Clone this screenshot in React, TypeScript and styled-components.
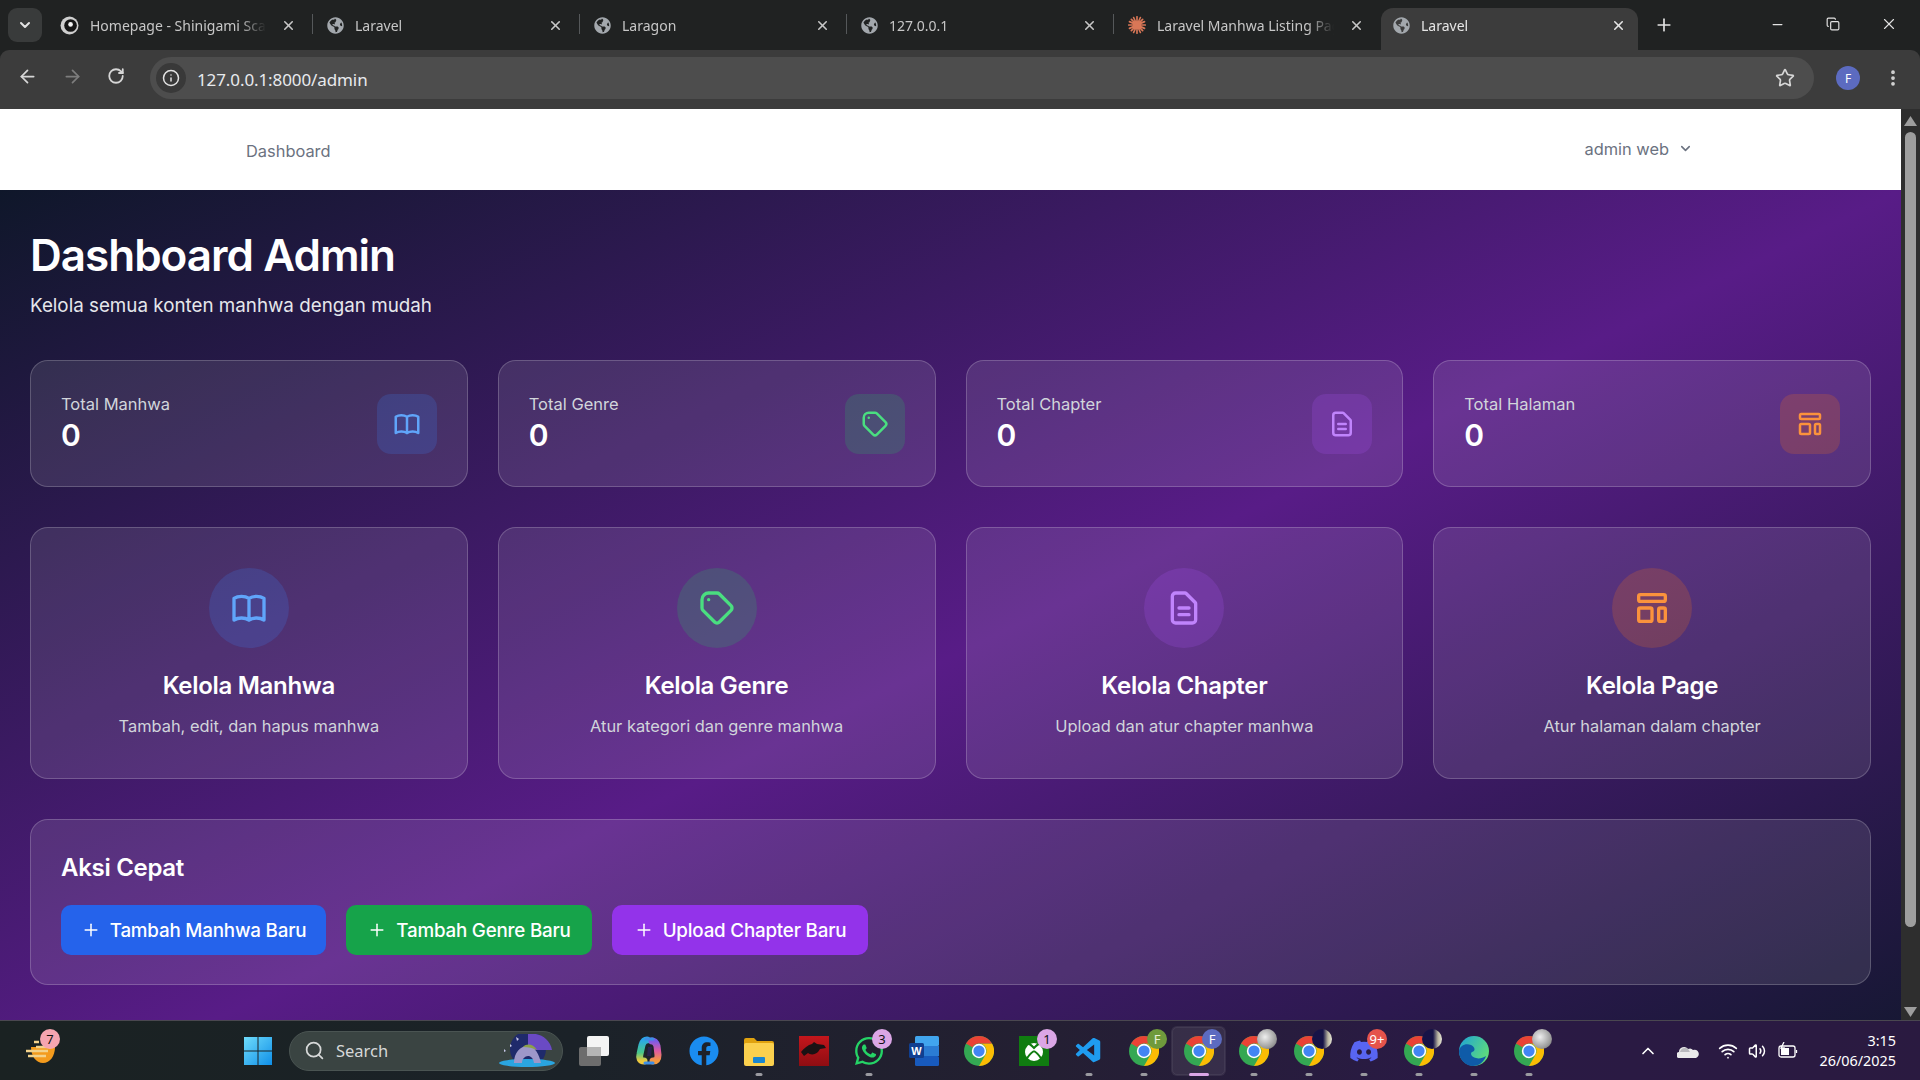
import React from 'react';
import styled, { createGlobalStyle } from 'styled-components';
import { FaDiscord, FaFacebook, FaGlobeAmericas, FaWhatsapp } from 'react-icons/fa';
import { VscVscode } from 'react-icons/vsc';
import { ArrowLeft, ArrowRight, ChevronDown, ChevronUp, Copy, EllipsisVertical, Info, Minus, Plus, RotateCw, Search, Star, Volume2, Wifi, X } from 'lucide-react';

const Global = createGlobalStyle`
  html, body { margin: 0; padding: 0; overflow: hidden; background: #202222; }
  * { box-sizing: border-box; }
`;

type Tone = 'blue' | 'green' | 'purple' | 'orange';

const tones: Record<Tone, { bg: string; fg: string }> = {
  blue: { bg: 'rgba(59,130,246,0.2)', fg: '#60a5fa' },
  green: { bg: 'rgba(34,197,94,0.2)', fg: '#4ade80' },
  purple: { bg: 'rgba(168,85,247,0.2)', fg: '#c084fc' },
  orange: { bg: 'rgba(249,115,22,0.2)', fg: '#fb923c' },
};

const Browser = styled.div`
  width: 1920px;
  height: 1080px;
  display: flex;
  flex-direction: column;
  overflow: hidden;
`;

/* chrome */
const TabStrip = styled.div`
  height: 50px;
  flex: none;
  background: #202222;
  display: flex;
  align-items: flex-end;
  padding-left: 8px;
  font-family: 'Noto Sans', sans-serif;
  font-size: 14px;
`;

const TabMenu = styled.div`
  width: 34px;
  height: 34px;
  margin: 0 4px 8px 0;
  border-radius: 9px;
  background: #393b3b;
  color: #e3e3e3;
  display: flex;
  align-items: center;
  justify-content: center;
`;

const Tab = styled.div<{ $active?: boolean; $last?: boolean }>`
  position: relative;
  width: ${(p) => (p.$active ? '257px' : '267px')};
  height: 42px;
  padding: ${(p) => (p.$active ? '0 12px 8px 12px' : '0 17px 8px 14px')};
  display: flex;
  align-items: center;
  gap: 11px;
  color: ${(p) => (p.$active ? '#e6e6e6' : '#c7c7c7')};
  background: ${(p) => (p.$active ? '#3c3c3c' : 'transparent')};
  border-radius: 12px 12px 0 0;
  &::after {
    content: '';
    display: ${(p) => (p.$active || p.$last ? 'none' : 'block')};
    position: absolute;
    right: 0;
    top: 6px;
    height: 20px;
    width: 1px;
    background: #55585a;
  }
`;

const TabTitle = styled.span`
  flex: 1;
  min-width: 0;
  margin-right: 4px;
  white-space: nowrap;
  overflow: hidden;
  -webkit-mask-image: linear-gradient(90deg, #000 85%, transparent);
  mask-image: linear-gradient(90deg, #000 85%, transparent);
`;

const NewTab = styled.div`
  width: 36px;
  height: 42px;
  margin-left: 8px;
  color: #e3e3e3;
  display: flex;
  align-items: center;
  justify-content: center;
  padding-bottom: 8px;
`;

const WindowButtons = styled.div`
  margin-left: auto;
  height: 50px;
  padding-right: 3px;
  display: flex;
  align-items: center;
  color: #e3e3e3;
`;

const WindowButton = styled.div`
  width: 56px;
  display: flex;
  justify-content: center;
  padding-bottom: 2px;
`;

const Toolbar = styled.div`
  height: 59px;
  flex: none;
  background: #3c3c3c;
  border-radius: 9px 9px 0 0;
  display: flex;
  align-items: center;
  padding: 0 15px 3px 17px;
  color: #dcdcdc;
`;

const NavButton = styled.div<{ $dim?: boolean }>`
  width: 45px;
  color: ${(p) => (p.$dim ? '#7d7d7d' : '#d6d6d6')};
`;

const Omnibox = styled.div`
  width: 1664px;
  height: 42px;
  margin-left: -2px;
  border-radius: 21px;
  background: #4d4d4d;
  display: flex;
  align-items: center;
  padding: 0 19px 0 6px;
  font-family: 'Noto Sans', sans-serif;
  font-size: 17px;
  color: #e8eaed;
`;

const SiteInfo = styled.div`
  width: 30px;
  height: 30px;
  border-radius: 50%;
  background: #393939;
  display: flex;
  align-items: center;
  justify-content: center;
  margin-right: 11px;
`;

const Url = styled.span`
  flex: 1;
  padding-top: 3px;
  letter-spacing: -0.1px;
`;

const Avatar = styled.div`
  width: 24px;
  height: 24px;
  margin-left: 22px;
  border-radius: 50%;
  background: #5c6bc0;
  color: #fff;
  font-family: 'Noto Sans', sans-serif;
  font-size: 12px;
  display: flex;
  align-items: center;
  justify-content: center;
`;

const Kebab = styled.div`
  margin-left: 23px;
  display: flex;
  color: #d6d6d6;
`;

/* page */
const Viewport = styled.div`
  flex: 1;
  min-height: 0;
  display: flex;
  overflow: hidden;
`;

const Page = styled.div`
  flex: 1;
  min-width: 0;
  font-family: 'Inter', sans-serif;
  overflow: hidden;
`;

const TopNav = styled.nav`
  height: 81px;
  background: #fff;
  display: flex;
  align-items: center;
  justify-content: space-between;
  padding: 0 208px 2px 246px;
  color: #6b7280;
  font-size: 16.4px;
`;

const NavLink = styled.a`
  padding-top: 5px;
  color: #6b7280;
`;

const UserMenu = styled.div`
  display: flex;
  align-items: center;
  gap: 9px;
  margin-left: -1px;
`;

const Main = styled.main`
  height: 935px;
  padding: 30px 30px 0;
  background: linear-gradient(to bottom right, #0f172a 0%, #581c87 50%, #0f172a 100%);
`;

const Title = styled.h1`
  margin: 0;
  font-size: 44px;
  line-height: 70px;
  font-weight: 600;
  letter-spacing: -1px;
  color: #fff;
`;

const Subtitle = styled.p`
  margin: 1px 0 39px;
  font-size: 18.8px;
  line-height: 30px;
  color: #e5e7eb;
`;

const CardGrid = styled.div`
  display: grid;
  grid-template-columns: repeat(4, 1fr);
  gap: 30px;
  margin-bottom: 40px;
`;

const Glass = styled.div`
  border-radius: 18px;
  background: rgba(255, 255, 255, 0.1);
  border: 1px solid rgba(255, 255, 255, 0.2);
`;

const StatCard = styled(Glass)`
  height: 127px;
  padding: 0 30px;
  display: flex;
  align-items: center;
  justify-content: space-between;
`;

const StatLabel = styled.div`
  font-size: 16.5px;
  line-height: 22px;
  margin-top: -1px;
  color: #d1d5db;
`;

const StatValue = styled.div`
  font-size: 30px;
  line-height: 36px;
  margin-top: 2px;
  font-weight: 600;
  color: #fff;
`;

const StatIcon = styled.div<{ $tone: Tone }>`
  width: 60px;
  height: 60px;
  border-radius: 14px;
  background: ${(p) => tones[p.$tone].bg};
  color: ${(p) => tones[p.$tone].fg};
  display: flex;
  align-items: center;
  justify-content: center;
`;

const ManageCard = styled(Glass)`
  height: 252px;
  padding-top: 40px;
  display: flex;
  flex-direction: column;
  align-items: center;
`;

const ManageIcon = styled.div<{ $tone: Tone }>`
  width: 80px;
  height: 80px;
  border-radius: 50%;
  background: ${(p) => tones[p.$tone].bg};
  color: ${(p) => tones[p.$tone].fg};
  display: flex;
  align-items: center;
  justify-content: center;
`;

const ManageTitle = styled.h3`
  margin: 20px 0 0;
  font-size: 24px;
  line-height: 36px;
  font-weight: 600;
  letter-spacing: -0.3px;
  color: #fff;
`;

const ManageText = styled.p`
  margin: 9px 0 0;
  font-size: 16.4px;
  line-height: 26px;
  color: #d1d5db;
`;

const QuickPanel = styled(Glass)`
  height: 166px;
  padding: 30px;
`;

const QuickTitle = styled.h3`
  margin: 0 0 19px;
  font-size: 24px;
  line-height: 36px;
  font-weight: 600;
  letter-spacing: -0.3px;
  color: #fff;
`;

const QuickRow = styled.div`
  display: flex;
  gap: 20px;
`;

const QuickButton = styled.a<{ $bg: string; $width: number }>`
  width: ${(p) => p.$width}px;
  height: 50px;
  display: flex;
  align-items: center;
  justify-content: center;
  gap: 9px;
  border-radius: 10px;
  background: ${(p) => p.$bg};
  color: #fff;
  font-size: 18.8px;
  font-weight: 500;
  letter-spacing: -0.2px;
  white-space: nowrap;
`;

const Scrollbar = styled.div`
  width: 19px;
  flex: none;
  background: #2e2e2e;
  display: flex;
  flex-direction: column;
  align-items: center;
  padding: 7px 0 3px;
`;

const ArrowGlyph = styled.div<{ $down?: boolean }>`
  width: 13px;
  height: 10px;
  background: #9e9e9e;
  clip-path: ${(p) => (p.$down ? 'polygon(0 0, 100% 0, 50% 100%)' : 'polygon(50% 0, 100% 100%, 0 100%)')};
`;

const Thumb = styled.div`
  width: 11px;
  height: 795px;
  margin-top: 6px;
  border-radius: 6px;
  background: #9e9e9e;
`;

const ScrollSpacer = styled.div`
  flex: 1;
`;

/* taskbar */
const Taskbar = styled.div`
  height: 60px;
  flex: none;
  border-top: 1px solid #4a4750;
  background: linear-gradient(90deg, #1a2222 0%, #1b2228 30%, #241f33 55%, #2a1a45 75%, #2a1a40 100%);
  display: flex;
  align-items: center;
  padding-left: 230px;
  position: relative;
  color: #fff;
  font-family: 'Noto Sans', sans-serif;
`;

const Weather = styled.div`
  position: absolute;
  left: 26px;
  top: 19px;
  width: 34px;
  height: 24px;
  display: flex;
`;

const TaskSlot = styled.div<{ $active?: boolean }>`
  position: relative;
  width: 55px;
  height: 50px;
  flex: none;
  display: flex;
  align-items: center;
  justify-content: center;
  border-radius: 6px;
  background: ${(p) => (p.$active ? 'rgba(255,255,255,0.08)' : 'transparent')};
  outline: ${(p) => (p.$active ? '1px solid rgba(255,255,255,0.06)' : 'none')};
  outline-offset: -2px;
`;

const RunDot = styled.i<{ $active?: boolean }>`
  position: absolute;
  bottom: 0;
  left: 50%;
  transform: translateX(-50%);
  width: ${(p) => (p.$active ? '20px' : '7px')};
  height: 3px;
  border-radius: 2px;
  background: ${(p) => (p.$active ? '#dba6e6' : '#9a9aa0')};
`;

const Badge = styled.span<{ $bg: string; $fg?: string }>`
  position: absolute;
  top: 3px;
  right: 4px;
  width: 20px;
  height: 20px;
  border-radius: 50%;
  background: ${(p) => p.$bg};
  color: ${(p) => p.$fg || '#111'};
  font-size: 13px;
  line-height: 20px;
  text-align: center;
`;

const WeatherBadge = styled(Badge)`
  top: -11px;
  right: 0;
`;

const SearchBox = styled.div`
  width: 274px;
  height: 40px;
  margin: 0 3px 0 4px;
  flex: none;
  border-radius: 20px;
  background: #3a4442;
  border: 1px solid #4a5452;
  display: flex;
  align-items: center;
  gap: 11px;
  padding-left: 14px;
  font-size: 16.5px;
  color: #d6d8d8;
  position: relative;
  overflow: hidden;
`;

const SearchArt = styled.div`
  position: absolute;
  right: 6px;
  top: 2px;
  display: flex;
`;

const Tray = styled.div`
  position: absolute;
  left: 1632px;
  right: 24px;
  top: 0;
  bottom: 0;
  display: flex;
  align-items: center;
`;

const TrayIcon = styled.div<{ $w: number }>`
  width: ${(p) => p.$w}px;
  display: flex;
  justify-content: center;
  flex: none;
`;

const Clock = styled.div`
  margin-left: auto;
  text-align: right;
  font-size: 14.4px;
  line-height: 20px;
  color: #fff;
`;

const Book = ({ size }: { size: number }) => (
  <svg width={size} height={size} viewBox="0 0 24 24" fill="none" stroke="currentColor" strokeWidth={2} strokeLinecap="round" strokeLinejoin="round">
    <path d="M12 6.253v13m0-13C10.832 5.477 9.246 5 7.5 5S4.168 5.477 3 6.253v13C4.168 18.477 5.754 18 7.5 18s3.332.477 4.5 1.253m0-13C13.168 5.477 14.754 5 16.5 5c1.747 0 3.332.477 4.5 1.253v13C19.832 18.477 18.247 18 16.5 18c-1.746 0-3.332.477-4.5 1.253" />
  </svg>
);

const TagIcon = ({ size }: { size: number }) => (
  <svg width={size} height={size} viewBox="0 0 24 24" fill="none" stroke="currentColor" strokeWidth={2} strokeLinecap="round" strokeLinejoin="round">
    <path d="M7 7h.01M7 3h5c.512 0 1.024.195 1.414.586l7 7a2 2 0 010 2.828l-7 7a2 2 0 01-2.828 0l-7-7A1.994 1.994 0 013 12V7a4 4 0 014-4z" />
  </svg>
);

const Doc = ({ size }: { size: number }) => (
  <svg width={size} height={size} viewBox="0 0 24 24" fill="none" stroke="currentColor" strokeWidth={2} strokeLinecap="round" strokeLinejoin="round">
    <path d="M9 12h6m-6 4h6m2 5H7a2 2 0 01-2-2V5a2 2 0 012-2h5.586a1 1 0 01.707.293l5.414 5.414a1 1 0 01.293.707V19a2 2 0 01-2 2z" />
  </svg>
);

const Layout = ({ size }: { size: number }) => (
  <svg width={size} height={size} viewBox="0 0 24 24" fill="none" stroke="currentColor" strokeWidth={2} strokeLinecap="round" strokeLinejoin="round">
    <path d="M4 5a1 1 0 011-1h14a1 1 0 011 1v2a1 1 0 01-1 1H5a1 1 0 01-1-1V5zM4 13a1 1 0 011-1h6a1 1 0 011 1v6a1 1 0 01-1 1H5a1 1 0 01-1-1v-6zM16 13a1 1 0 011-1h2a1 1 0 011 1v6a1 1 0 01-1 1h-2a1 1 0 01-1-1v-6z" />
  </svg>
);

const Chrome = () => (
  <svg width={30} height={30} viewBox="0 0 48 48">
    <circle cx="24" cy="24" r="24" fill="#34a853" />
    <path d="M44.8 12A24 24 0 0 1 24 48L34.4 30A12 12 0 0 0 24 12Z" fill="#fbbc04" />
    <path d="M24 0A24 24 0 0 1 44.8 12H24A12 12 0 0 0 13.6 18L3.2 12A24 24 0 0 1 24 0Z" fill="#ea4335" />
    <circle cx="24" cy="24" r="11.5" fill="#fff" />
    <circle cx="24" cy="24" r="9" fill="#4285f4" />
  </svg>
);

const Windows = () => (
  <svg width={30} height={30} viewBox="0 0 30 30">
    <defs>
      <linearGradient id="win" x1="0" y1="0" x2="1" y2="1">
        <stop offset="0" stopColor="#6fdcfb" />
        <stop offset="1" stopColor="#0f8fe8" />
      </linearGradient>
    </defs>
    <path d="M1 1h13.500v13.500H1zM15.500 1H29v13.500H15.500zM1 15.500h13.500V29H1zM15.500 15.500H29V29H15.500z" fill="url(#win)" />
  </svg>
);

const TaskView = () => (
  <svg width={30} height={30} viewBox="0 0 30 30">
    <rect x="0" y="11" width="22" height="19" rx="2" fill="#6d6d6d" />
    <rect x="8" y="0" width="22" height="20" rx="2" fill="#f4f4f4" />
    <rect x="8" y="11" width="14" height="9" fill="#b5b5b5" />
  </svg>
);

const Copilot = () => (
  <svg width={28} height={30} viewBox="0 0 28 30" fill="none" strokeLinecap="round">
    <defs>
      <linearGradient id="cp1" x1="0" y1="0" x2="0" y2="1">
        <stop offset="0" stopColor="#2aa7e8" />
        <stop offset="0.6" stopColor="#49c78a" />
        <stop offset="1" stopColor="#f0c93d" />
      </linearGradient>
      <linearGradient id="cp2" x1="0" y1="0" x2="0" y2="1">
        <stop offset="0" stopColor="#7a5be8" />
        <stop offset="0.5" stopColor="#e05aa0" />
        <stop offset="1" stopColor="#f59a3d" />
      </linearGradient>
    </defs>
    <path d="M12 4C9 4 8 6 7 9L5 18c-1 4 0 7 4 7" stroke="url(#cp1)" strokeWidth="7" />
    <path d="M17 5c3 0 4 2 5 5l1 9c0 4-1 6-5 6" stroke="url(#cp2)" strokeWidth="7" />
    <path d="M11 3h7M10 27h8" stroke="#3f8fe6" strokeWidth="3" />
    <path d="M13 11h4l-1 9h-4z" fill="#27224f" />
  </svg>
);

const Files = () => (
  <svg width={30} height={30} viewBox="0 0 30 30">
    <path d="M0 4a2 2 0 012-2h8l3 3h15a2 2 0 012 2v3H0z" fill="#e0a20f" />
    <rect x="0" y="7" width="30" height="23" rx="2" fill="#fbd04e" />
    <rect x="9" y="21" width="12" height="6" rx="1" fill="#1a86d0" />
  </svg>
);

const Msi = () => (
  <svg width={30} height={30} viewBox="0 0 30 30">
    <defs>
      <linearGradient id="msi" x1="0" y1="0" x2="0" y2="1">
        <stop offset="0" stopColor="#c4161c" />
        <stop offset="1" stopColor="#8e0d12" />
      </linearGradient>
    </defs>
    <rect width="30" height="30" fill="url(#msi)" />
    <path d="M2 16c3-4 7-7 11-8l2-2 3 2 7 1 2 3-6 1-2 3c-3 3-8 3-10 1l-4 3z" fill="#1a1214" />
  </svg>
);

const Word = () => (
  <svg width={30} height={30} viewBox="0 0 30 30">
    <rect x="6" y="0" width="24" height="10" rx="1.500" fill="#41a5ee" />
    <rect x="6" y="10" width="24" height="10" fill="#2b7cd3" />
    <rect x="6" y="20" width="24" height="10" rx="1.500" fill="#185abd" />
    <rect x="0" y="7" width="15" height="15" rx="1.500" fill="#103f91" />
    <text x="7.500" y="18.500" fontSize="11" fontWeight="700" fill="#fff" textAnchor="middle" fontFamily="Liberation Sans, sans-serif">W</text>
  </svg>
);

const Xbox = () => (
  <svg width={30} height={30} viewBox="0 0 30 30">
    <rect width="30" height="30" fill="#107c10" />
    <circle cx="15" cy="16" r="9" fill="#fff" />
    <path d="M15 15c-3 2-6 5-7 8 M15 15c3 2 6 5 7 8 M9 7c2 1 4 3 6 5 2-2 4-4 6-5" stroke="#107c10" strokeWidth="2" fill="none" />
  </svg>
);

const Edge = () => (
  <svg width={30} height={30} viewBox="0 0 30 30">
    <defs>
      <linearGradient id="edg" x1="0" y1="0" x2="1" y2="0.600">
        <stop offset="0" stopColor="#1da2d8" />
        <stop offset="1" stopColor="#5fdc7a" />
      </linearGradient>
    </defs>
    <circle cx="15" cy="15" r="15" fill="url(#edg)" />
    <path d="M0 15C1 9 7 7 12 9c4 2 5 6 1 7-2 1-1 5 4 6 3 1 7 0 10-2-2 6-7 10-13 10C6 30 0 23 0 15z" fill="#0f5ba8" />
  </svg>
);

const Sparkle = () => (
  <svg width={18} height={18} viewBox="0 0 24 24" stroke="#d97757" strokeWidth={2.200} strokeLinecap="round">
    <path d="M12 1v22M1 12h22M4.500 4.500l15 15M19.500 4.500l-15 15M7.500 2l9 20M16.500 2l-9 20M2 7.500l20 9M22 7.500l-20 9" />
  </svg>
);

const SiteLogo = () => (
  <svg width={19} height={19} viewBox="0 0 18 18">
    <circle cx="9" cy="9" r="8.500" fill="#cfcfcf" />
    <circle cx="10" cy="9" r="6" fill="#151515" />
    <circle cx="10" cy="8" r="2.200" fill="#f3f3f3" />
  </svg>
);

const WeatherArt = () => (
  <svg width={30} height={24} viewBox="0 0 30 24">
    <path d="M5 7h24c0 9-5 16-12 16S5 16 5 7z" fill="#f39b1d" />
    <path d="M8 2h5M10 7h17M0 11h22M2 16h18" stroke="#f3d28a" strokeWidth="2.500" />
  </svg>
);

const Landscape = () => (
  <svg width={58} height={34} viewBox="0 0 58 34">
    <circle cx="30" cy="15" r="18" fill="#1f2a6b" />
    <path d="M30 0c10-2 22 4 24 16H30z" fill="#6a4ac4" />
    <path d="M18 3l3 2-2 2zM12 10l2 2-2 1zM6 15l2 2-2 1z" fill="#c8c8e8" />
    <ellipse cx="29" cy="29" rx="28" ry="4" fill="#2aa5e0" />
    <path d="M16 29c0-11 7-18 15-17 6 1 10 8 12 17h-7c-1-5-3-7-6-7s-6 3-6 7z" fill="#9d97c9" />
    <path d="M25 13c4-4 10-3 14 3-4-2-9-3-14-3z" fill="#8ca04a" />
  </svg>
);

const OneDrive = () => (
  <svg width={22} height={14} viewBox="0 0 22 14">
    <path d="M3 14a3 3 0 01-1-6 5 5 0 019-3 4 4 0 015 1 4 4 0 013 8z" fill="#eaeaea" />
    <path d="M3 8a5 5 0 018-3l2 3z" fill="#b9b9bd" />
  </svg>
);

const Battery = () => (
  <svg width={20} height={18} viewBox="0 0 20 18" fill="none" stroke="#fff" strokeWidth="1.300">
    <rect x="1" y="4" width="16" height="11" rx="2" />
    <path d="M18.500 8v3" />
    <rect x="3" y="6" width="8" height="7" fill="#fff" stroke="none" />
    <path d="M6 0L3 6h3l-2 4" />
  </svg>
);

const stats: { label: string; tone: Tone; icon: React.FC<{ size: number }> }[] = [
  { label: 'Total Manhwa', tone: 'blue', icon: Book },
  { label: 'Total Genre', tone: 'green', icon: TagIcon },
  { label: 'Total Chapter', tone: 'purple', icon: Doc },
  { label: 'Total Halaman', tone: 'orange', icon: Layout },
];

const manage: { title: string; text: string; tone: Tone; icon: React.FC<{ size: number }> }[] = [
  { title: 'Kelola Manhwa', text: 'Tambah, edit, dan hapus manhwa', tone: 'blue', icon: Book },
  { title: 'Kelola Genre', text: 'Atur kategori dan genre manhwa', tone: 'green', icon: TagIcon },
  { title: 'Kelola Chapter', text: 'Upload dan atur chapter manhwa', tone: 'purple', icon: Doc },
  { title: 'Kelola Page', text: 'Atur halaman dalam chapter', tone: 'orange', icon: Layout },
];

const quick = [
  { label: 'Tambah Manhwa Baru', bg: '#2563eb', width: 265 },
  { label: 'Tambah Genre Baru', bg: '#16a34a', width: 246 },
  { label: 'Upload Chapter Baru', bg: '#9333ea', width: 256 },
];

const globe = <FaGlobeAmericas size={17} color="#a3a8ad" />;

const tabs = [
  { title: 'Homepage - Shinigami Scans', icon: <SiteLogo /> },
  { title: 'Laravel', icon: globe },
  { title: 'Laragon', icon: globe },
  { title: '127.0.0.1', icon: globe },
  { title: 'Laravel Manhwa Listing Page', icon: <Sparkle />, last: true },
];

const photoGray = 'radial-gradient(circle at 40% 40%, #eeeeee, #9a9a9a 65%, #555)';
const photoNavy = 'linear-gradient(90deg, #161347 55%, #b8b4a0 80%, #e8e8d8)';

export default function App() {
  return (
    <Browser>
      <Global />
      <TabStrip>
        <TabMenu>
          <ChevronDown size={16} strokeWidth={3} />
        </TabMenu>
        {tabs.map((t) => (
          <Tab key={t.title} $last={t.last}>
            {t.icon}
            <TabTitle>{t.title}</TabTitle>
            <X size={15} strokeWidth={2.5} />
          </Tab>
        ))}
        <Tab $active>
          {globe}
          <TabTitle>Laravel</TabTitle>
          <X size={15} strokeWidth={2.5} />
        </Tab>
        <NewTab>
          <Plus size={20} />
        </NewTab>
        <WindowButtons>
          <WindowButton>
            <Minus size={15} />
          </WindowButton>
          <WindowButton>
            <Copy size={14} />
          </WindowButton>
          <WindowButton>
            <X size={18} strokeWidth={1.5} />
          </WindowButton>
        </WindowButtons>
      </TabStrip>
      <Toolbar>
        <NavButton>
          <ArrowLeft size={21} />
        </NavButton>
        <NavButton $dim>
          <ArrowRight size={21} />
        </NavButton>
        <NavButton>
          <RotateCw size={18} strokeWidth={2.4} />
        </NavButton>
        <Omnibox>
          <SiteInfo>
            <Info size={18} color="#e3e3e3" />
          </SiteInfo>
          <Url>127.0.0.1:8000/admin</Url>
          <Star size={20} color="#d6d6d6" />
        </Omnibox>
        <Avatar>F</Avatar>
        <Kebab>
          <EllipsisVertical size={20} strokeWidth={2.5} />
        </Kebab>
      </Toolbar>
      <Viewport>
        <Page>
          <TopNav>
            <NavLink>Dashboard</NavLink>
            <UserMenu>
              admin web
              <ChevronDown size={15} strokeWidth={2.5} />
            </UserMenu>
          </TopNav>
          <Main>
            <Title>Dashboard Admin</Title>
            <Subtitle>Kelola semua konten manhwa dengan mudah</Subtitle>
            <CardGrid>
              {stats.map((s) => (
                <StatCard key={s.label}>
                  <div>
                    <StatLabel>{s.label}</StatLabel>
                    <StatValue>0</StatValue>
                  </div>
                  <StatIcon $tone={s.tone}>
                    <s.icon size={30} />
                  </StatIcon>
                </StatCard>
              ))}
            </CardGrid>
            <CardGrid>
              {manage.map((m) => (
                <ManageCard key={m.title}>
                  <ManageIcon $tone={m.tone}>
                    <m.icon size={40} />
                  </ManageIcon>
                  <ManageTitle>{m.title}</ManageTitle>
                  <ManageText>{m.text}</ManageText>
                </ManageCard>
              ))}
            </CardGrid>
            <QuickPanel>
              <QuickTitle>Aksi Cepat</QuickTitle>
              <QuickRow>
                {quick.map((q) => (
                  <QuickButton key={q.label} $bg={q.bg} $width={q.width}>
                    <Plus size={20} strokeWidth={1.8} />
                    {q.label}
                  </QuickButton>
                ))}
              </QuickRow>
            </QuickPanel>
          </Main>
        </Page>
        <Scrollbar>
          <ArrowGlyph />
          <Thumb />
          <ScrollSpacer />
          <ArrowGlyph $down />
        </Scrollbar>
      </Viewport>
      <Taskbar>
        <Weather>
          <WeatherArt />
          <WeatherBadge $bg="#f6a5b0">7</WeatherBadge>
        </Weather>
        <TaskSlot>
          <Windows />
        </TaskSlot>
        <SearchBox>
          <Search size={21} />
          Search
          <SearchArt>
            <Landscape />
          </SearchArt>
        </SearchBox>
        <TaskSlot>
          <TaskView />
        </TaskSlot>
        <TaskSlot>
          <Copilot />
        </TaskSlot>
        <TaskSlot>
          <FaFacebook size={30} color="#1a8cf0" />
        </TaskSlot>
        <TaskSlot>
          <Files />
          <RunDot />
        </TaskSlot>
        <TaskSlot>
          <Msi />
        </TaskSlot>
        <TaskSlot>
          <FaWhatsapp size={32} color="#25d366" />
          <Badge $bg="#dba6e6">3</Badge>
          <RunDot />
        </TaskSlot>
        <TaskSlot>
          <Word />
        </TaskSlot>
        <TaskSlot>
          <Chrome />
        </TaskSlot>
        <TaskSlot>
          <Xbox />
          <Badge $bg="#dba6e6">1</Badge>
        </TaskSlot>
        <TaskSlot>
          <VscVscode size={30} color="#1f9cf0" />
          <RunDot />
        </TaskSlot>
        <TaskSlot>
          <Chrome />
          <Badge $bg="#6f9a3c" $fg="#e8f0d8">F</Badge>
          <RunDot />
        </TaskSlot>
        <TaskSlot $active>
          <Chrome />
          <Badge $bg="#5c6bc0" $fg="#fff">F</Badge>
          <RunDot $active />
        </TaskSlot>
        <TaskSlot>
          <Chrome />
          <Badge $bg={photoGray} />
          <RunDot />
        </TaskSlot>
        <TaskSlot>
          <Chrome />
          <Badge $bg={photoNavy} />
          <RunDot />
        </TaskSlot>
        <TaskSlot>
          <FaDiscord size={30} color="#5865f2" />
          <Badge $bg="#e5534b" $fg="#fff">9+</Badge>
          <RunDot />
        </TaskSlot>
        <TaskSlot>
          <Chrome />
          <Badge $bg={photoNavy} />
          <RunDot />
        </TaskSlot>
        <TaskSlot>
          <Edge />
          <RunDot />
        </TaskSlot>
        <TaskSlot>
          <Chrome />
          <Badge $bg={photoGray} />
          <RunDot />
        </TaskSlot>
        <Tray>
          <TrayIcon $w={32}>
            <ChevronUp size={20} />
          </TrayIcon>
          <TrayIcon $w={48}>
            <OneDrive />
          </TrayIcon>
          <TrayIcon $w={32}>
            <Wifi size={20} />
          </TrayIcon>
          <TrayIcon $w={26}>
            <Volume2 size={18} />
          </TrayIcon>
          <TrayIcon $w={36}>
            <Battery />
          </TrayIcon>
          <Clock>
            3:15
            <br />
            26/06/2025
          </Clock>
        </Tray>
      </Taskbar>
    </Browser>
  );
}
